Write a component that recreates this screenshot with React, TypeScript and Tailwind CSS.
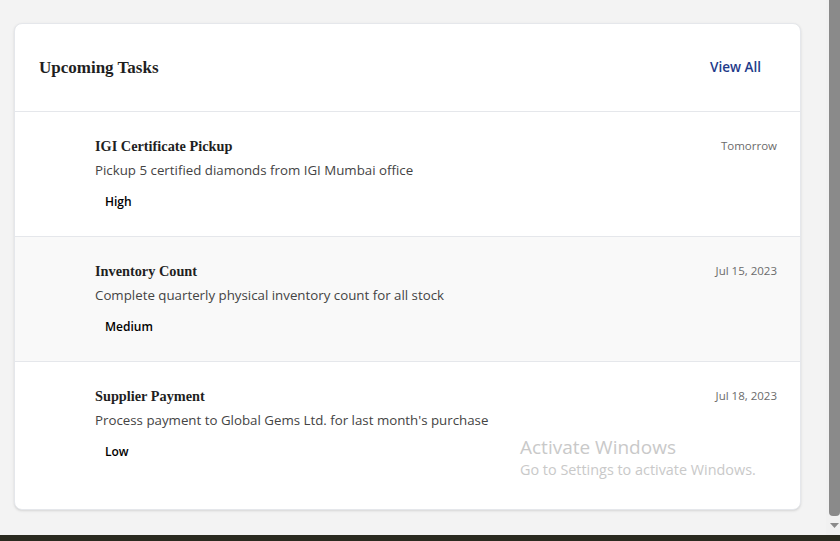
import React from "react";

const tasks = [
  { title: "IGI Certificate Pickup", desc: "Pickup 5 certified diamonds from IGI Mumbai office", date: "Tomorrow", priority: "High" },
  { title: "Inventory Count", desc: "Complete quarterly physical inventory count for all stock", date: "Jul 15, 2023", priority: "Medium" },
  { title: "Supplier Payment", desc: "Process payment to Global Gems Ltd. for last month's purchase", date: "Jul 18, 2023", priority: "Low" },
];

const serif = { fontFamily: '"Liberation Serif", "DejaVu Serif", serif' };

export default function App() {
  return (
    <div className="w-[840px] h-[541px] flex flex-col bg-[#f3f3f3] overflow-hidden" style={{ fontFamily: '"Open Sans", "Noto Sans", sans-serif' }}>
      <div className="flex flex-1 min-h-0">
        <div className="flex-1 relative pt-[23px] pl-[14px] pr-[25px]">
          <div className="bg-white rounded-lg border border-[#e5e7eb] shadow-sm overflow-hidden">
            <div className="h-[88px] flex items-center justify-between pl-6 pr-[39px] border-b border-[#e5e7eb]">
              <h2 className="text-[17px] font-bold text-[#1f1f1f]" style={serif}>Upcoming Tasks</h2>
              <button className="text-[13.5px] font-semibold text-[#1e3a8a]">View All</button>
            </div>
            <div className="pb-[23px]">
              {tasks.map((t, i) => (
                <div key={t.title} className={`flex pl-6 pr-[23px] pt-6 pb-[22px] ${i === 1 ? "bg-[#f9f9f9]" : "bg-white"} ${i < 2 ? "border-b border-[#e5e7eb]" : ""}`}>
                  <div className="w-10 shrink-0" />
                  <div className="flex-1 ml-4 flex flex-col">
                    <div className="flex justify-between items-center h-5">
                      <h3 className="text-[14.3px] leading-5 font-bold text-[#1f1f1f]" style={serif}>{t.title}</h3>
                      <span className="text-[11.5px] leading-5 text-[#6b6b6b]">{t.date}</span>
                    </div>
                    <p className="mt-1 text-[13.3px] leading-5 text-[#444]">{t.desc}</p>
                    <div className="mt-[10px] flex h-6">
                      <span className="px-2.5 py-1 text-[12px] leading-4 font-semibold text-black">{t.priority}</span>
                    </div>
                  </div>
                </div>
              ))}
            </div>
          </div>
          <div className="absolute left-[520px] top-[435px] text-[#c9c9c9] pointer-events-none" style={{ fontFamily: '"Open Sans", sans-serif' }}>
            <div className="text-[19px] leading-6">Activate Windows</div>
            <div className="text-[14.4px] leading-5 mt-[1px]">Go to Settings to activate Windows.</div>
          </div>
        </div>
        <div className="w-[14px] bg-[#f1f1f1] flex flex-col items-end">
          <div className="w-[11px] h-[516px] bg-[#8a8a8a] rounded-b-[4px]" />
          <svg width="11" height="12" viewBox="0 0 11 12" className="mt-[4px]">
            <polygon points="1,3 10,3 5.5,8" fill="#8a8a8a" />
          </svg>
        </div>
      </div>
      <div className="h-[6px] bg-[#2a2a1f]" />
    </div>
  );
}
